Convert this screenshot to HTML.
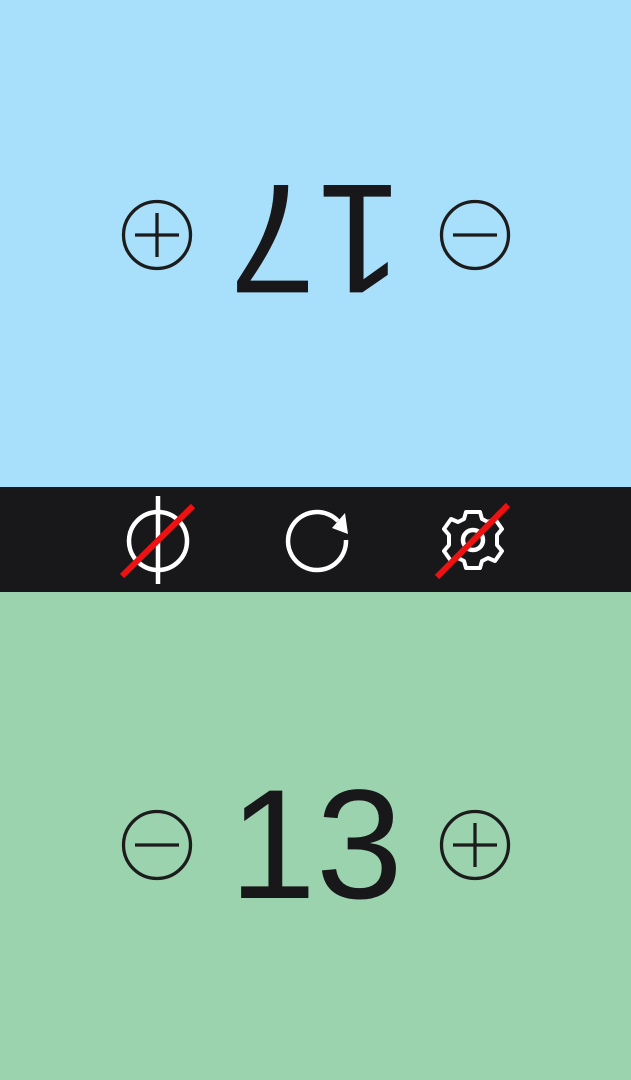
<!DOCTYPE html>
<html><head><style>
html,body{margin:0;padding:0;width:631px;height:1080px;overflow:hidden;font-family:"Liberation Sans",sans-serif}
.num{position:absolute;font-size:156px;color:#18181a;text-align:center;width:300px;line-height:1}
</style></head><body>
<div style="position:absolute;left:0;top:0;width:631px;height:487px;background:#a8dffa"></div>
<div style="position:absolute;left:0;top:487px;width:631px;height:105px;background:#18181a"></div>
<div style="position:absolute;left:0;top:592px;width:631px;height:488px;background:#9bd3ae"></div>
<div class="num" style="left:166px;top:767px">13</div>
<div class="num" style="left:166px;top:160px;transform:rotate(180deg)">17</div>
<svg width="631" height="1080" style="position:absolute;left:0;top:0">
<g fill="none" stroke="#1c1c1c" stroke-width="3.3">
<circle cx="157" cy="845" r="33.5"/><line x1="135" y1="845" x2="179" y2="845"/>
<circle cx="475" cy="845" r="33.5"/><line x1="453" y1="845" x2="497" y2="845"/><line x1="475" y1="823" x2="475" y2="867"/>
<circle cx="157" cy="235" r="33.5"/><line x1="135" y1="235" x2="179" y2="235"/><line x1="157" y1="213" x2="157" y2="257"/>
<circle cx="475" cy="235" r="33.5"/><line x1="453" y1="235" x2="497" y2="235"/>
</g>
<g fill="none" stroke="#fff" stroke-width="4.5">
<circle cx="158" cy="541" r="29"/><line x1="158" y1="496" x2="158" y2="584"/>
<path d="M346 540 A29 29 0 1 1 338 521"/>
<circle cx="473" cy="540" r="10"/>
<path d="M466 512 h14 l2 7 l6 3 l7-3 l7 10 l-5 6 v10 l5 6 l-7 10 l-7-3 l-6 3 l-2 7 h-14 l-2-7 l-6-3 l-7 3 l-7-10 l5-6 v-10 l-5-6 l7-10 l7 3 l6-3 z" stroke-width="4" stroke-linejoin="round"/>
</g>
<path d="M345 513 l3 21 l-16 -6 z" fill="#fff"/>
<g stroke="#ee1111" stroke-width="6">
<line x1="122" y1="576" x2="193" y2="506"/>
<line x1="437" y1="577" x2="508" y2="505"/>
</g>
</svg>
</body></html>
